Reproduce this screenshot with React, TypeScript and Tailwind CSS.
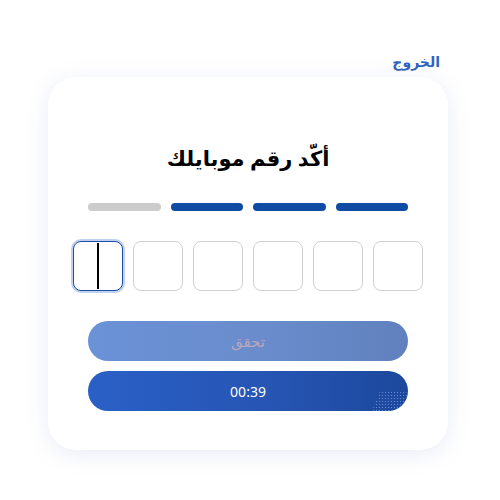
import { useState } from "react";

const steps = [true, true, true, false];

export default function App() {
  const [code] = useState(["", "", "", "", "", ""]);

  return (
    <div
      dir="rtl"
      className="min-h-[500px] w-[500px] bg-white pt-[52px] font-['Noto_Sans','DejaVu_Sans',sans-serif]"
    >
      <div className="mr-[52px] w-[400px]">
        <div className="flex justify-start pr-[8px]">
          <a href="#" className="text-[14px] font-semibold leading-[20px] text-[#2f62c0]">
            الخروج
          </a>
        </div>
        <div className="mt-[5px] h-[373px] rounded-[28px] bg-white px-[40px] pt-[66px] shadow-[0_4px_22px_rgba(120,135,190,0.16)]">
          <h1 className="text-center text-[21px] font-bold leading-[30px] text-black">
            أكّد رقم موبايلك
          </h1>
          <div className="mt-[30px] flex gap-[10px]">
            {steps.map((on, i) => (
              <div
                key={i}
                className={`h-[8px] flex-1 rounded-full ${on ? "bg-[#0f4aa3]" : "bg-[#cccccc]"}`}
              />
            ))}
          </div>
          <div dir="ltr" className="-mx-[15px] mt-[30px] flex gap-[10px]">
            {code.map((c, i) => (
              <div
                key={i}
                className={`relative flex h-[50px] w-[50px] items-center justify-center rounded-[8px] border bg-white ${
                  i === 0
                    ? "border-[#1d4ea8] shadow-[0_0_0_2px_rgba(140,170,225,0.55)]"
                    : "border-[#d0d0d0]"
                }`}
              >
                {c}
                {i === 0 && <span className="h-[46px] w-[1.5px] bg-black" />}
              </div>
            ))}
          </div>
          <button className="mt-[30px] flex h-[40px] w-full items-center justify-center rounded-full bg-[linear-gradient(90deg,#6a92d6,#6a8ccc_55%,#6081bd)] text-[15px] text-[#b8a6bd]">
            تحقق
          </button>
          <button className="relative mt-[10px] flex h-[40px] w-full items-center justify-center overflow-hidden rounded-full bg-[linear-gradient(90deg,#2a60c6,#2655b4_55%,#1c489c)] text-[14px] text-white">
            <span dir="ltr">00:39</span>
            <svg
              className="absolute bottom-0 right-0 h-[20px] w-[36px]"
              viewBox="0 0 36 20"
            >
              <defs>
                <pattern id="dots" width="3" height="3" patternUnits="userSpaceOnUse">
                  <circle cx="1.5" cy="1.5" r="0.6" fill="#6f93dd" />
                </pattern>
              </defs>
              <polygon points="36,2 36,20 0,20 8,0 30,0" fill="url(#dots)" />
            </svg>
          </button>
        </div>
      </div>
    </div>
  );
}
